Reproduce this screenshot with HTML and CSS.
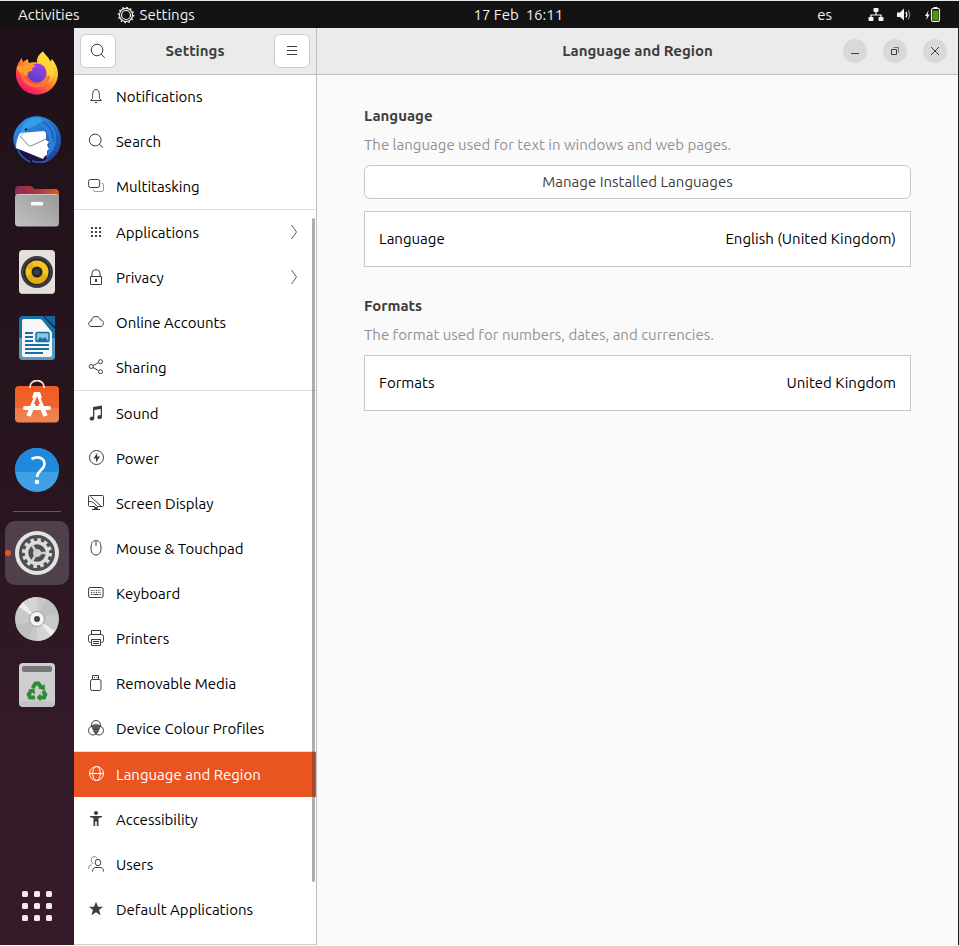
FILE: index.html
```html
<!DOCTYPE html>
<html lang="en-GB">
<head>
<meta charset="utf-8">
<meta name="viewport" content="width=device-width, initial-scale=1">
<title>Settings – Language and Region</title>
<link rel="stylesheet" href="styles.css">
</head>
<body>
<div class="desktop">
  <header class="topbar">
    <div class="topbar-left">
      <button class="top-item activities" type="button">Activities</button>
      <button class="top-item" type="button">
        <svg width="18" height="18" viewBox="0 0 18 18" fill="none" stroke="#f2f2f2"><circle cx="9" cy="9" r="6.6" stroke-width="1.2"/><circle cx="9" cy="9" r="4.5" stroke-width="1.2"/><circle cx="9" cy="9" r="7.6" stroke-width="1.4" stroke-dasharray="1.6 2.38"/></svg>
        Settings
      </button>
    </div>
    <button class="top-item clock" type="button">17 Feb&nbsp; 16:11</button>
    <div class="topbar-right">
      <button class="top-item lang" type="button">es</button>
      <button class="top-item tray" type="button" aria-label="System menu">
        <svg width="16" height="16" viewBox="0 0 16 16" fill="#f5f5f5"><rect x="5.5" y="1" width="5" height="4" rx=".8"/><rect x="0.500" y="10" width="5" height="4" rx=".8"/><rect x="10.500" y="10" width="5" height="4" rx=".8"/><path d="M8 5v3M3 11V8h10v3" fill="none" stroke="#f5f5f5" stroke-width="1.200"/></svg>
        <svg width="16" height="16" viewBox="0 0 16 16" fill="#f5f5f5"><path d="M1 5.500h3L8 1.500v12l-4-3.500H1z"/><path d="M9.800 5q2 2.700 0 5.400" fill="none" stroke="#f5f5f5" stroke-width="1.300"/><path d="M12 3q3.400 4.700 0 9.400" fill="none" stroke="#8b8b8b" stroke-width="1.200"/></svg>
        <svg width="17" height="16" viewBox="0 0 17 16"><path d="M4.500 3.500 1 9h2l-.8 4L5.700 7.500h-2z" fill="#f5f5f5"/><rect x="7.500" y="1.500" width="8" height="13" rx="1.500" fill="#111" stroke="#f5f5f5" stroke-width="1.100"/><path d="M9.500 .7h4" stroke="#f5f5f5" stroke-width="1.400"/><rect x="8.500" y="3.500" width="6" height="10" fill="#4e9a06"/></svg>
      </button>
    </div>
  </header>

  <div class="workspace">
    <nav class="dock" aria-label="Dock">
      <a class="dock-item" href="#" aria-label="Firefox">
        <svg width="48" height="48" viewBox="0 0 48 48">
          <defs>
            <linearGradient id="fx1" x1=".85" y1=".05" x2=".2" y2=".95"><stop offset="0" stop-color="#fff44f"/><stop offset=".35" stop-color="#ffb52e"/><stop offset=".6" stop-color="#ff6d35"/><stop offset=".85" stop-color="#ff2c5c"/><stop offset="1" stop-color="#e8196f"/></linearGradient>
            <linearGradient id="fx2" x1=".7" y1="0" x2=".2" y2="1"><stop offset="0" stop-color="#a13ff0"/><stop offset="1" stop-color="#4f3fc0"/></linearGradient>
          </defs>
          <path d="M30 1.500c2 3 5.500 5.500 7 9.500 1 1 1-1 2-2 4 5 6 10 6 15 0 11-9.500 20.500-21 20.500S3 35.500 3 24c0-5 1-9.500 3.500-12.500L8.500 8l1.500 4 4.500-3 1.500 4c3-1 6-1 8-.5C23.500 8 26 4 30 1.500z" fill="url(#fx1)"/>
          <path d="M30 1.500c1.500 5 10.500 8 11 20 .2 6-5 12-10 13 4-5 4-12 1-17-2-3-7-5-7-7 0-4 2-7 5-9z" fill="#ffdb35" opacity=".75"/>
          <circle cx="24" cy="23" r="9.500" fill="url(#fx2)"/>
          <path d="M3.500 18C5 15 9 14 14 15c4-2 6-1 9 1-3 1-4 2-4 5-3 0-5 2-5 5-3-1-8-2-10.500-8z" fill="#ff9a28"/>
          <path d="M9 23c1 7 6 12 14 13 7 0 12-4 13-10" fill="none" stroke="#ff7137" stroke-width="3"/>
        </svg>
      </a>
      <a class="dock-item" href="#" aria-label="Thunderbird Mail">
        <svg width="50" height="50" viewBox="0 0 50 50">
          <defs><linearGradient id="tb" x1=".2" y1="0" x2=".8" y2="1"><stop offset="0" stop-color="#2e94e6"/><stop offset=".5" stop-color="#2470c9"/><stop offset="1" stop-color="#1d3f9c"/></linearGradient></defs>
          <path d="M10 7C14 2 25-1 34 3c9 4 15 12 15 22 0 11-7 20-17 23l4-8-32-6C-1 25 1 15 10 7z" fill="url(#tb)"/>
          <path d="M24 3c12 1 20 9 20 20 0 9-4 15-10 20 3-7 4-13 3-19-2-9-6-13-14-15z" fill="#2b7fd8"/>
          <path d="M33 9c7 4 9 11 9 18M37 7c7 5 9 13 8 21M30 6c8 4 11 10 10 18M45 12c3 7 3 16-1 24" stroke="#1b58b0" fill="none"/>
          <path d="m5 34 29 8-3 6C17 46 9 42 5 34z" fill="#1f1147"/>
          <path d="m8 18 24-2 2 2 0 7 3 2-2 3 2 4-2 2v4l-2 1-2 3L4 33c0-5 1-10 4-15z" fill="#fff"/>
          <path d="m8 21 8 9c1 1 2 1.500 4 .5l15-7" stroke="#80868e" fill="none"/>
          <path d="M6 35c2 5 6 9 12 12M20 46c7 2 12 2 16-1" stroke="#2763b3" stroke-width="1.600" fill="none"/>
          <path d="M9 19c0-7 4-13 12-16 5-1 8 0 11 3-4 0-6 3-10 5-4 1-6 2-8 5z" fill="#389de9"/>
          <circle cx="14" cy="14.500" r="1.200" fill="#0e2340"/>
          <path d="M10 17c-1 1-2 3-1 5l3-3z" fill="#cde3f5"/>
        </svg>
      </a>
      <a class="dock-item" href="#" aria-label="Files">
        <svg width="48" height="48" viewBox="0 0 48 48">
          <defs><linearGradient id="fl1"><stop offset="0" stop-color="#8c2b52"/><stop offset=".5" stop-color="#ae3541"/><stop offset="1" stop-color="#e8541f"/></linearGradient><linearGradient id="fl2" x1="1" y1="0" x2="0" y2="1"><stop offset="0" stop-color="#989898"/><stop offset="1" stop-color="#c2c2c2"/></linearGradient></defs>
          <path d="M2 8q0-4 4-4h11q2 0 3 1.500T23 7h19q4 0 4 4v20H2z" fill="url(#fl1)"/><rect x="2" y="12" width="44" height="32.500" rx="3.500" fill="url(#fl2)"/><path d="M3 13.500q1-1 3-1h36q2 0 3 1" stroke="#c9c9c9" fill="none"/><rect x="18" y="20" width="12" height="3.500" rx="1" fill="#fff"/>
        </svg>
      </a>
      <a class="dock-item" href="#" aria-label="Rhythmbox">
        <svg width="48" height="48" viewBox="0 0 48 48"><rect x="6" y="2" width="36" height="44" rx="4" fill="#e4e2d8"/><path d="M8 45.500h32" stroke="#c5c2b9"/><circle cx="24" cy="24" r="16" fill="#3b3a48"/><circle cx="24" cy="24" r="13" fill="#252525"/><circle cx="24" cy="24" r="11.500" fill="#f4c421"/><path d="M24 24 13 28a11.500 11.500 0 0 0 22 0zM24 24 13.500 20a11 11 0 0 1 5-5.500z" fill="#dca30d" opacity=".65"/><circle cx="24" cy="24" r="5.500" fill="#252525"/><circle cx="24" cy="24" r="3" fill="#353f47"/></svg>
      </a>
      <a class="dock-item" href="#" aria-label="LibreOffice Writer">
        <svg width="48" height="48" viewBox="0 0 48 48"><path d="M10 2h20l12 13v27q0 4-4 4H10q-4 0-4-4V6q0-4 4-4z" fill="#1672a5"/><path d="M6 24v18q0 4 4 4h28q4 0 4-4V24z" fill="#539cc1"/><path d="M31 2h11v11z" fill="#14679a"/><path d="M11 5h15q2 0 3 1l9 11q1 1 1 3v21q0 2-2 2H11q-2 0-2-2V7q0-2 2-2z" fill="#f7f7f7"/><path d="M12 19h8M12 23h8M12 27h8M12 31h24M12 35h24M12 39h18" stroke="#196fa4" stroke-width="2"/><rect x="23" y="18.500" width="13" height="9" rx="1" fill="#8dc5e2" stroke="#196fa4" stroke-width="1.500"/><path d="m24 27 3-4 3 2 2-2 3 4z" fill="#196fa4"/></svg>
      </a>
      <a class="dock-item" href="#" aria-label="Ubuntu Software">
        <svg width="48" height="48" viewBox="0 2 48 48"><defs><linearGradient id="sw" x1="0" y1="0" x2="0" y2="1"><stop offset="0" stop-color="#f05a24"/><stop offset=".6" stop-color="#ef652d"/><stop offset=".61" stop-color="#ef7b48"/><stop offset="1" stop-color="#f08550"/></linearGradient></defs><rect x="2" y="8" width="44" height="36.500" rx="4" fill="url(#sw)"/><path d="M17 10V9a7 6.500 0 0 1 14 0v1" fill="none" stroke="#f6e2d2" stroke-width="1.800"/><path d="M24 17 15.500 38M24 17l8.500 21" stroke="#fff" stroke-width="4.500"/><path d="M21 14h6l2 6H19z" fill="#fff"/><path d="m24 18-3 8h6z" fill="#f05d27"/><path d="M12 30h24" stroke="#fff" stroke-width="4" stroke-linecap="round"/></svg>
      </a>
      <a class="dock-item" href="#" aria-label="Help">
        <svg width="48" height="48" viewBox="0 0 48 48"><circle cx="24" cy="24" r="22" fill="#3fa0e6"/><path d="M2 26a22 22 0 0 1 44-4v4z" fill="#2089dc"/><path d="M18.500 13c7-3.500 13-1 13 5 0 6-7 6-7.500 13" fill="none" stroke="#fff" stroke-width="2.600"/><circle cx="24" cy="36" r="2.300" fill="#fff"/></svg>
      </a>
      <hr class="dock-rule">
      <a class="dock-item is-running" href="#" aria-label="Settings">
        <svg width="48" height="48" viewBox="0 0 48 48"><circle cx="24" cy="24" r="22" fill="#e4e3e1"/><circle cx="24" cy="24" r="18" fill="#4c504f"/><circle cx="24" cy="24" r="10.500" fill="none" stroke="#dedddb" stroke-width="3.500"/><circle cx="24" cy="24" r="13" fill="none" stroke="#dedddb" stroke-width="4" stroke-dasharray="3.400 3.407"/><circle cx="24" cy="24" r="4" fill="#cfcecc"/><path d="M24 24h9M24 24l-5-8M24 24l-5 8" stroke="#cfcecc" stroke-width="2.500"/></svg>
      </a>
      <a class="dock-item" href="#" aria-label="Disc">
        <svg width="48" height="48" viewBox="0 0 48 48"><circle cx="24" cy="24" r="22" fill="#c9c9c8"/><path d="M24 24V2a22 22 0 0 0-15 6zM24 24v22a22 22 0 0 0 15-6z" fill="#d4d4d3"/><path d="m24 24 21-6a22 22 0 0 0-12-14zM24 24 3 30a22 22 0 0 0 12 14z" fill="#c0c0c0"/><path d="M24 24 6 12l4-5zM24 24l18 12-4 5z" fill="#eeeeec"/><circle cx="24" cy="24" r="7.500" fill="#f4f4f2" stroke="#a09a92"/><circle cx="24" cy="24" r="3" fill="#454545"/></svg>
      </a>
      <a class="dock-item" href="#" aria-label="Rubbish Bin">
        <svg width="48" height="48" viewBox="0 0 48 48"><rect x="6" y="2" width="36" height="44" rx="4" fill="#cecece"/><path d="M6 40q0 6 5 6h26q5 0 5-6z" fill="#c4c4c4"/><rect x="9" y="5" width="30" height="6" rx="2" fill="#777"/><g fill="none" stroke="#2b8c35" stroke-width="4"><path d="m19.500 27 3-4.500h3l3 4.500"/><path d="m30 30 2.300 3.500-1.300 3H26"/><path d="M22 36.500h-5l-1.300-3 2.300-3.500"/></g><path d="m31.500 23 .5 6.500-6.500-2zM27.500 32.500v8l-4-4zM15 28.500l6.500-1 .5 6z" fill="#2b8c35"/></svg>
      </a>
      <a class="dock-item dock-apps" href="#" aria-label="Show Applications">
        <svg width="32" height="32" viewBox="0 0 32 32" fill="#f3eaf0"><rect x="1" y="1" width="6" height="6" rx="1.500"/><rect x="13" y="1" width="6" height="6" rx="1.500"/><rect x="25" y="1" width="6" height="6" rx="1.500"/><rect x="1" y="13" width="6" height="6" rx="1.500"/><rect x="13" y="13" width="6" height="6" rx="1.500"/><rect x="25" y="13" width="6" height="6" rx="1.500"/><rect x="1" y="25" width="6" height="6" rx="1.500"/><rect x="13" y="25" width="6" height="6" rx="1.500"/><rect x="25" y="25" width="6" height="6" rx="1.500"/></svg>
      </a>
    </nav>

    <aside class="sidebar">
      <div class="headerbar sidebar-header">
        <button class="header-button" type="button" aria-label="Search settings"><svg class="icon" viewBox="0 0 16 16"><circle cx="7" cy="7" r="5.800"/><path d="m11.200 11.200 3.600 3.600"/></svg></button>
        <h1 class="header-title">Settings</h1>
        <button class="header-button" type="button" aria-label="Main menu"><svg class="icon" viewBox="0 0 16 16"><path d="M3 3.500h10M3 7.500h10M3 11.500h10"/></svg></button>
      </div>
      <nav class="panel-list" aria-label="Settings panels">
        <div class="panel-group">
          <a class="panel" href="#"><svg class="icon" viewBox="0 0 16 16"><path d="M2.500 12.500h11M4.500 10.500c.3-1 0-2 .1-4C4.700 3 6 1.500 8 1.500s3.300 1.500 3.400 5c.1 2-.2 3 .1 4M4.500 10.500l-2 2M11.500 10.500l2 2"/><path class="fill" d="M6.500 14h3L8 15.500z"/></svg>Notifications</a>
          <a class="panel" href="#"><svg class="icon" viewBox="0 0 16 16"><circle cx="7.200" cy="7" r="5.900"/><path d="m11.400 11.200 3.600 3.600"/></svg>Search</a>
          <a class="panel" href="#"><svg class="icon" viewBox="0 0 16 16"><rect x=".6" y="1.500" width="11" height="8" rx="1.800"/><path d="M13.500 5.500h1q1 0 1 1v5.500q0 1.500-1.500 1.500H6.500q-1 0-1-1v-1" opacity=".5"/></svg>Multitasking</a>
        </div>
        <div class="panel-group">
          <a class="panel" href="#"><svg class="icon solid" viewBox="0 0 16 16"><path d="M3 3h2v2H3zM7 3h2v2H7zM11 3h2v2h-2zM3 7h2v2H3zM7 7h2v2H7zM11 7h2v2h-2zM3 11h2v2H3zM7 11h2v2H7zM11 11h2v2h-2z"/></svg>Applications<svg class="chevron" viewBox="0 0 8 16"><path d="m1.500 1 5 7-5 7"/></svg></a>
          <a class="panel" href="#"><svg class="icon" viewBox="0 0 16 16"><path d="M2.500 7.500h11v8h-11zM4 7.500V5a4 4.200 0 0 1 8 0v2.500"/><path d="M8 10v3" stroke-width="2"/></svg>Privacy<svg class="chevron" viewBox="0 0 8 16"><path d="m1.500 1 5 7-5 7"/></svg></a>
          <a class="panel" href="#"><svg class="icon" viewBox="0 0 16 16"><path d="M3 12.500C-.3 11.500 0 7.500 3.300 7 3.500 4 5.300 2.500 8 2.500S12 4 12.500 6c3.300 0 4 4.800.8 6.500z"/></svg>Online Accounts</a>
          <a class="panel" href="#"><svg class="icon" viewBox="0 0 16 16"><circle cx="3.200" cy="7.500" r="2"/><circle cx="12.500" cy="2.700" r="2"/><circle cx="12.500" cy="12.700" r="2"/><path d="m5 6.500 5.700-2.900M5 8.500l5.700 3.300"/></svg>Sharing</a>
        </div>
        <div class="panel-group">
          <a class="panel" href="#"><svg class="icon solid" viewBox="0 0 16 16"><path d="M5 2 14 .5V12a2.300 2 0 1 1-1.300-1.800V4L6.300 5v8.500a2.300 2 0 1 1-1.300-1.800z"/></svg>Sound</a>
          <a class="panel" href="#"><svg class="icon" viewBox="0 0 16 16"><circle cx="8.500" cy="7.500" r="7"/><path class="fill" d="m9.500 2.500-4 6H8v4l4-6H9z"/></svg>Power</a>
          <a class="panel" href="#"><svg class="icon" viewBox="0 0 16 16"><path d="M7 11.500H1.500q-1 0-1-1v-9q0-1 1-1h13q1 0 1 1v9q0 1-1 1H9M2.500 1.500l11 10M1 6.500q5 0 7.500 4.500M4 14.500h8"/><path class="fill" d="M6.500 12h3l.7 3H5.800z"/></svg>Screen Display</a>
          <a class="panel" href="#"><svg class="icon" viewBox="0 0 16 16"><path d="M7.500.7h1C11.500.7 13 3 13 8c0 4-1.500 7-5 7s-5-3-5-7C3 3 4.500.7 7.500.7zM8 1v5"/></svg>Mouse &amp; Touchpad</a>
          <a class="panel" href="#"><svg class="icon" viewBox="0 0 16 16"><rect x=".6" y="2.500" width="14.500" height="10" rx="1.500"/><path d="M3 5.500h10M3 7.500h10" stroke-dasharray="1.200 1.200"/><path d="M3 9.500h1.500M5.500 9.500h5M11.500 9.500H13"/></svg>Keyboard</a>
          <a class="panel" href="#"><svg class="icon" viewBox="0 0 16 16"><path d="M3.500 4.500v-4h9v4M2.500 12.500q-2 0-2-2v-4q0-2 2-2h11q2 0 2 2v4q0 2-2 2M3.500 9.500v6h9v-6M3 9.500h10M5 11.500h6M5 13.500h6"/></svg>Printers</a>
          <a class="panel" href="#"><svg class="icon" viewBox="0 0 16 16"><rect x="2.500" y="4.500" width="10.500" height="11" rx="1.800"/><path d="M4.500 4V.5h6V4M6 2.500h1M8.500 2.500h1"/></svg>Removable Media</a>
          <a class="panel" href="#"><svg class="icon" viewBox="0 0 16 16"><circle cx="8" cy="5" r="4.500"/><circle cx="5" cy="10.500" r="4.500"/><circle cx="11" cy="10.500" r="4.500"/><path class="fill" d="M3.700 6.200a5 5 0 0 1 8.600 0C12 9 10.500 13 8 14.200 5.500 13 4 9 3.700 6.200z" opacity=".75"/></svg>Device Colour Profiles</a>
        </div>
        <div class="panel-group">
          <a class="panel is-selected" href="#" aria-current="page"><svg class="icon" viewBox="0 0 16 16"><circle cx="8.500" cy="7.500" r="7"/><ellipse cx="8.500" cy="7.500" rx="3.800" ry="7"/><path d="M1.500 7.500h14"/></svg>Language and Region</a>
          <a class="panel" href="#"><svg class="icon solid" viewBox="0 0 16 16"><circle cx="8" cy="2" r="2"/><path d="M2 5h12v1.200l-3.500.8v8H8.800v-4.500H7.200V15H5.500V7L2 6.200z"/></svg>Accessibility</a>
          <a class="panel" href="#"><svg class="icon" viewBox="0 0 16 16"><g opacity=".6"><path d="M9 2.300C8.500 1 7.500.6 6.300.6 4.500.6 3.200 2 3.200 4S4.300 7.300 5.500 7.500M.6 13V11.500Q.8 9 3.500 8.800"/></g><ellipse cx="10" cy="6.500" rx="2.800" ry="3.200"/><path d="M4.500 15.500c0-3 1.500-4 3.500-4h4c2 0 3.500 1 3.500 4"/></svg>Users</a>
          <a class="panel" href="#"><svg class="icon solid" viewBox="0 0 16 16"><path d="m8 .7 2 5h5l-4 3.300 1.500 5.300L8 11.200l-4.500 3.100L5 9 1 5.700h5z"/></svg>Default Applications</a>
        </div>
      </nav>
      <div class="scroll-thumb"></div>
    </aside>

    <main class="content">
      <div class="headerbar content-header">
        <h2 class="header-title">Language and Region</h2>
        <div class="window-controls">
          <button type="button" aria-label="Minimise"><svg class="icon" viewBox="0 0 16 16"><path d="M4 10.500h8"/></svg></button>
          <button type="button" aria-label="Restore"><svg class="icon" viewBox="0 0 16 16"><path d="M4.500 6.500h5v5h-5z"/><path d="M6.500 4.500h5v5" opacity=".65"/></svg></button>
          <button type="button" aria-label="Close"><svg class="icon" viewBox="0 0 16 16"><path d="m4 4 8 8M12 4l-8 8"/></svg></button>
        </div>
      </div>
      <div class="page">
        <section class="section">
          <h3>Language</h3>
          <p>The language used for text in windows and web pages.</p>
          <button class="manage" type="button">Manage Installed Languages</button>
          <button class="row" type="button"><span>Language</span><span>English (United Kingdom)</span></button>
        </section>
        <section class="section">
          <h3>Formats</h3>
          <p>The format used for numbers, dates, and currencies.</p>
          <button class="row" type="button"><span>Formats</span><span>United Kingdom</span></button>
        </section>
      </div>
    </main>
  </div>
</div>
</body>
</html>
```
FILE: styles.css
```css
* {
  box-sizing: border-box;
}

body {
  margin: 0;
  font: 15px/20px Ubuntu, "Noto Sans", sans-serif;
  color: #000;
  background: #fafafa;
}

button {
  font: inherit;
  color: inherit;
  margin: 0;
  padding: 0;
  border: 0;
  background: none;
}

a {
  color: inherit;
  text-decoration: none;
}

h1, h2, h3, p {
  margin: 0;
}

svg {
  display: block;
  flex: none;
}

.desktop {
  display: flex;
  flex-direction: column;
  height: 100vh;
  padding-bottom: 1px;
  border-top: 1px solid #e6e9e8;
  overflow: hidden;
}

/* Top bar */
.topbar {
  display: flex;
  flex: none;
  height: 27px;
  padding: 0 18px;
  background: #131313;
  color: #f2f2f2;
}

.topbar-left {
  display: flex;
  flex: 0 0 calc(50% - 6px);
  gap: 37px;
}

.top-item {
  display: flex;
  align-items: center;
  gap: 5px;
}

.topbar-right {
  display: flex;
  gap: 36px;
  margin-left: auto;
}

.tray {
  gap: 12px;
}

/* Dock */
.workspace {
  display: flex;
  flex: 1;
  min-height: 0;
}

.dock {
  display: flex;
  flex: none;
  flex-direction: column;
  align-items: center;
  width: 74px;
  padding: 13px 0 6px;
  background: linear-gradient(#1f1119, #28151f 50%, #321a28 75%, #371a2a);
}

.dock-item {
  position: relative;
  display: flex;
  flex: none;
  align-items: center;
  justify-content: center;
  width: 64px;
  height: 64px;
  margin: 1px 0;
  border-radius: 10px;
}

.dock-item.is-running {
  background: #50404b;
}

.dock-item.is-running::before {
  content: "";
  position: absolute;
  left: 0;
  width: 6px;
  height: 6px;
  border-radius: 50%;
  background: #e95420;
}

.dock-rule {
  width: 48px;
  height: 1px;
  margin: 8px 0;
  border: 0;
  background: #64565f;
}

.dock-apps {
  margin-top: auto;
}

/* Header bars */
.headerbar {
  position: relative;
  z-index: 1;
  display: flex;
  flex: none;
  align-items: center;
  height: 47px;
  background: #ebebeb;
  border-bottom: 1px solid #bdbdbd;
}

.sidebar-header {
  justify-content: space-between;
  padding: 0 6px;
}

.header-title {
  font-size: 15px;
  line-height: 20px;
  color: #3d3d3d;
}

.header-button {
  display: flex;
  align-items: center;
  justify-content: center;
  width: 36px;
  height: 34px;
  border: 1px solid #cdcdcd;
  border-radius: 6px;
  background: #fff;
}

.content-header {
  justify-content: center;
}

.window-controls {
  position: absolute;
  right: 11px;
  display: flex;
  gap: 16px;
}

.window-controls button {
  display: grid;
  place-items: center;
  width: 24px;
  height: 24px;
  border-radius: 50%;
  background: #d9d9d9;
}

.icon {
  width: 16px;
  height: 16px;
  fill: none;
  stroke: #3d3d3d;
  stroke-width: 1;
}

.icon.solid,
.icon .fill {
  fill: #3d3d3d;
  stroke: none;
}

/* Sidebar */
.sidebar {
  position: relative;
  display: flex;
  flex: none;
  flex-direction: column;
  width: 243px;
  background: #fff;
  border-right: 1px solid #bdbdbd;
  border-bottom: 1px solid #d0d0d0;
  overflow: hidden;
}

.panel-list {
  margin-top: -1px;
}

.panel-group + .panel-group {
  border-top: 1px solid #dedede;
}

.panel {
  display: flex;
  align-items: center;
  gap: 12px;
  height: 45px;
  padding: 0 18px 0 14px;
}

.panel svg {
  margin-bottom: 1px;
}

.panel.is-selected {
  background: #e95420;
  color: #fff;
}

.panel.is-selected .icon {
  stroke: #fff;
}

.chevron {
  width: 8px;
  height: 16px;
  margin-left: auto;
  fill: none;
  stroke: #5e5e5e;
}

.scroll-thumb {
  position: absolute;
  top: 190px;
  right: 1px;
  bottom: 62px;
  width: 3px;
  border-radius: 2px;
  background: rgba(60, 60, 60, 0.42);
}

/* Content */
.content {
  flex: 1;
  min-width: 0;
  background: #fafafa;
  border-right: 1px solid #222;
}

.page {
  display: flex;
  flex-direction: column;
  gap: 29px;
  padding: 31px 47px;
}

.section h3 {
  font-size: 15px;
  line-height: 20px;
  color: #3d3d3d;
}

.section p {
  margin: 9px 0 10px;
  color: #929292;
}

.manage,
.row {
  display: flex;
  align-items: center;
  width: 100%;
  border: 1px solid #c8c8c8;
  background: #fff;
}

.manage {
  justify-content: center;
  height: 34px;
  margin-bottom: 12px;
  border-radius: 6px;
  color: #3d3d3d;
}

.row {
  justify-content: space-between;
  height: 56px;
  padding: 0 14px;
}
```
